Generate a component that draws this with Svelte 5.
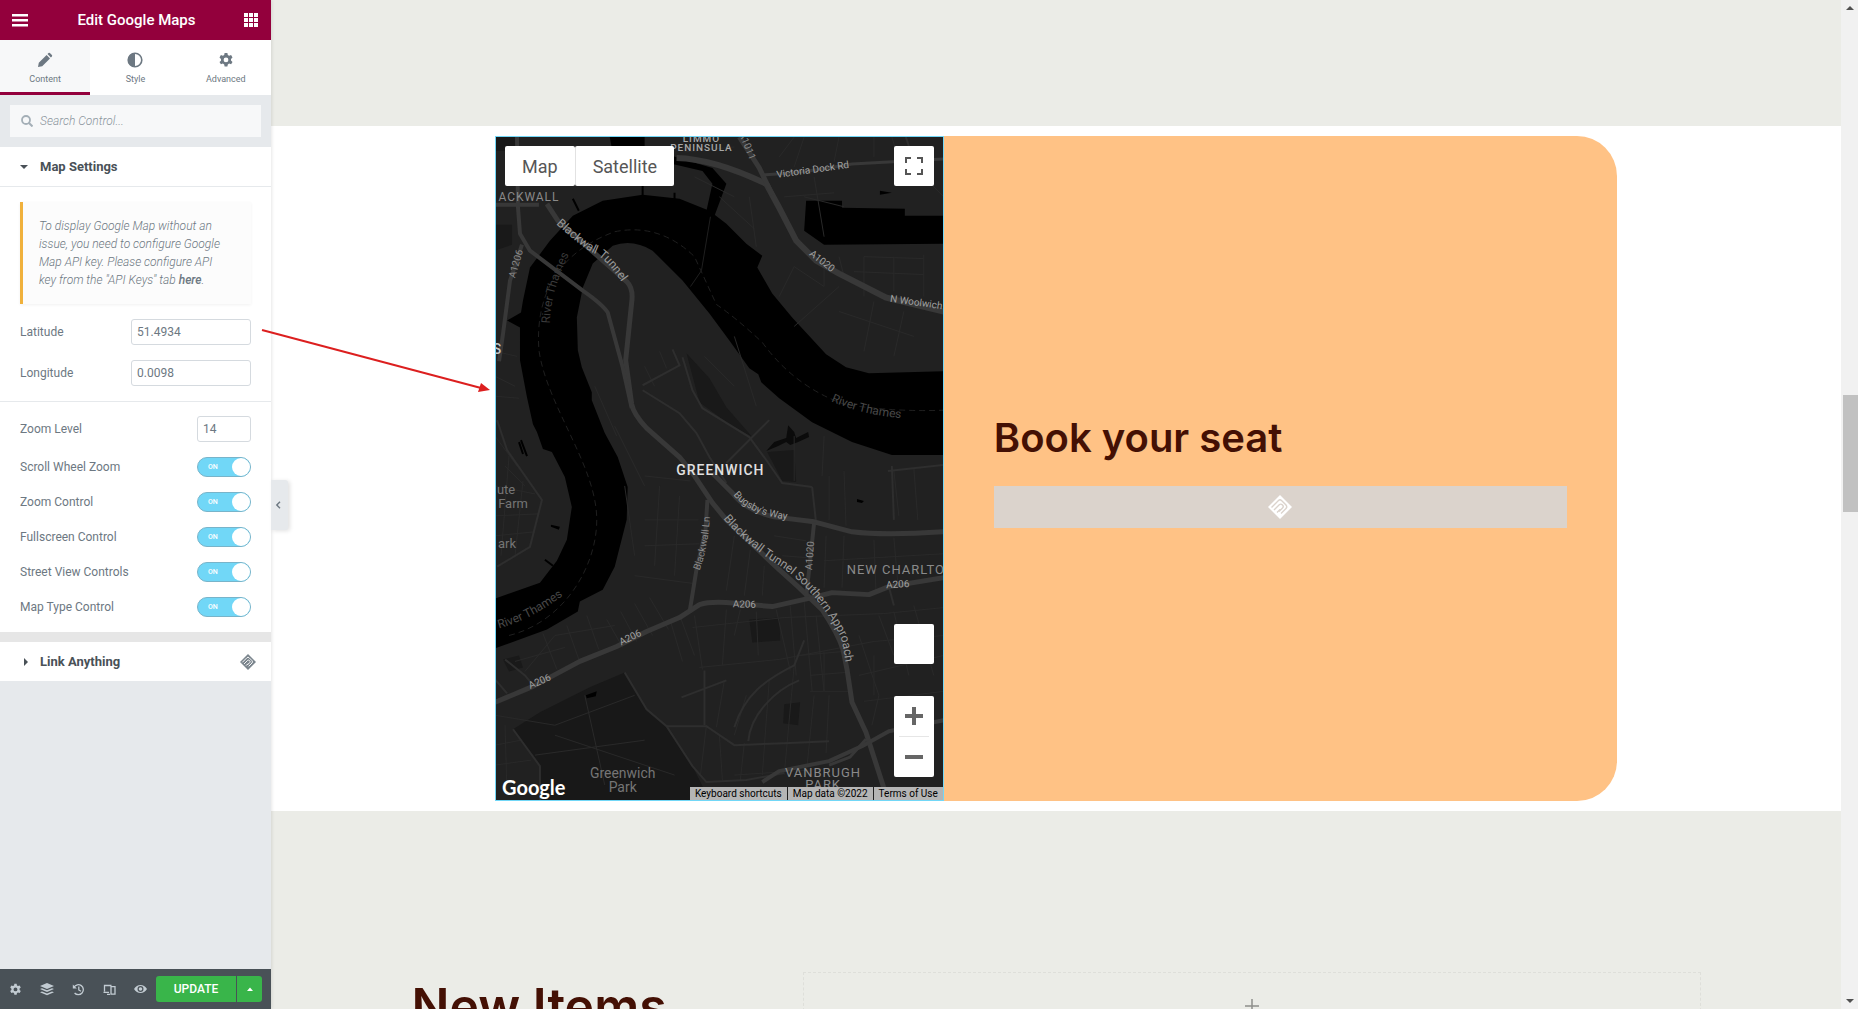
<script>
  let latitude = $state('51.4934');
  let longitude = $state('0.0098');
  let zoom = $state('14');
  let activeTab = $state('Content');

  let switches = $state([
    { id: 'scroll-wheel', label: 'Scroll Wheel Zoom', on: true },
    { id: 'zoom-control', label: 'Zoom Control', on: true },
    { id: 'fullscreen', label: 'Fullscreen Control', on: true },
    { id: 'street-view', label: 'Street View Controls', on: true },
    { id: 'map-type', label: 'Map Type Control', on: true }
  ]);

  const gear =
    'M6.6 1h2.8l.4 2 1.3.8 2-.7 1.4 2.4-1.5 1.4v1.6l1.5 1.4-1.4 2.4-2-.7-1.3.8-.4 2H6.6l-.4-2-1.3-.8-2 .7-1.4-2.4L3 8.700V7.100L1.500 5.500l1.400-2.400 2 .7L6.200 3zM8 5.500a2.400 2.400 0 1 0 0 4.800 2.400 2.400 0 0 0 0-4.800z';

  // main roads, drawn wide
  const roads = [
    { d: 'M52 67 63 84 132 145Q139 152 137 166L131 224 137 268Q139 278 152 292L185 321 198 337 218 367 232 384 285 434 305 452 328 474Q344 498 349 514L353 534 358 567 372 597 388 647 394 665', w: 5 },
    { d: 'M22 0 23 71 25 97 35 114 88 154Q108 168 113 176L128 231 137 272', w: 4 },
    { d: 'M27 108 15 144 8 197 4 225', w: 4 },
    { d: 'M182 21Q220 22 272 47L285 71 302 104 322 124 345 137 392 161 450 175', w: 6 },
    { d: 'M245 0 265 31 278 58', w: 5 },
    { d: 'M268 38Q310 36 358 27L450 22', w: 3 },
    { d: 'M0 567 38 551 85 526 122 511 152 496 185 482 205 469Q215 466 232 467L278 471 318 462 338 457 375 459 395 451 450 442', w: 5 },
    { d: 'M218 337 238 357Q250 374 280 381L320 386 358 396Q390 400 450 396', w: 5 },
    { d: 'M320 387 315 434 312 461', w: 4 },
    { d: 'M213 364 211 395 202 434 195 477', w: 4 },
    { d: 'M268 647 285 636 335 626 368 611 395 596 450 585', w: 4 },
    { d: 'M335 630 356 622 372 604', w: 3 },
    { d: 'M0 68H44', w: 4 }
  ];

  // side streets
  const lanes = [
    'M148 254 185 277 202 297 215 321 232 347',
    'M188 221 198 254 208 272 255 301 272 324 288 347 318 351',
    'M148 249 185 229 178 213M232 327 275 284',
    'M2 284 12 314 47 364 35 411 2 431',
    'M130 537 152 574 172 591 198 631 212 647 252 645 290 638',
    'M18 594 45 631 45 665M0 544 12 558',
    'M412 0 420 24M395 451 400 470M318 351 322 387',
    'M10 524 30 540 40 552M398 330 400 384M394 335 450 329',
    'M172 591H212L240 610 290 608 335 606M240 592C250 560 270 545 300 530L310 505',
    'M254 606C256 580 280 555 305 545M210 535V590M187 562 232 545'
  ];

  const streets = [
    'M205 532 285 524 380 506 450 500M198 492 290 482 390 478 450 472',
    'M140 468 158 500M126 476 142 506M112 484 128 512M155 462 174 494M176 486 188 526M186 482 200 520M200 480 208 534',
    'M232 474 228 530M246 474 240 500M262 476 264 520M282 474 296 535M296 470 302 540M310 466 318 556M322 480 330 556',
    'M305 520 350 516M316 540 352 537M316 556H354M330 516V556M230 545 222 592M252 560 240 600M275 545 268 640M300 530 290 640',
    'M320 560 312 640M335 560 332 618M212 590 206 640M225 600 228 645M250 608 246 645M240 640 330 634',
    'M365 500 385 560 378 590M385 480 400 520M400 476 415 540M420 470 440 540M365 540 450 520M370 566 450 556M380 520V560',
    'M150 340 196 345M150 384H204M165 350 160 430M185 360 180 440M150 410 205 408M140 440 200 448',
    'M240 400 232 455M256 414 250 460M270 430 268 460M332 400 330 452M350 400 348 452M380 404 382 455M400 402 404 448M330 425 450 418',
    'M280 400 312 405M288 420 314 422M335 340V384M350 335 352 390M300 300V345M330 300 328 340M400 335 405 380M420 332 424 384',
    'M285 160 300 130 330 150M300 190 345 150M330 120V150M345 120 350 140M370 120 430 122M360 135 430 138M370 120V160M400 120V155M430 118V160M345 175 420 200M380 165 370 215M410 175 400 220',
    'M200 40 240 60M255 60 262 110M285 20 300 0M300 30 310 0M340 25 345 0M380 20V0M225 60 260 92M240 10 190 15M140 40 150 10',
    'M0 300 22 330M10 330 30 350M0 350 40 358M0 380 44 378M0 400 40 396M14 320 6 420M28 345 20 420M0 240 20 250M0 260 24 262M0 215 22 220',
    'M100 250 122 300M120 290 150 350M130 350 140 420M150 230 160 250M165 215 172 232M210 220 240 250M240 200 262 270',
    'M0 580 60 590M60 590 140 560M60 600 180 640M90 560 110 650M40 620 150 605M0 610 26 605M0 630 36 625M10 590 12 660',
    'M30 536 60 500 120 490M20 526 70 512M48 498 62 534M72 490 84 524M92 480 104 514',
    'M398 0 404 20M420 30 450 60M310 60 350 70M320 40 330 100M290 60 340 56'
  ];

  const river =
    'M0 463 45 447 62 425 72 404 77 371 70 341 57 316 48 313 42 296 38 288 32 261 25 224 25 191 12 184 26 176 28 164 35 131 55 104 78 79 108 64 148 58 185 62 215 74 232 87 252 107 268 119 263 131 278 157 298 181 332 218 352 231 375 237 450 235V319H398L358 306 318 286 285 262 267 246 264 238 255 232 235 204 215 177 188 144 158 114Q138 102 118 109L98 127 88 151 82 181 83 214 87 231 97 256V264L110 297 123 321 133 351 132 384 120 431 108 454 85 466 83 476 52 494 0 513Z';

  const labels = [
    { text: 'LIMMO', x: 207, y: 5, size: 10, fill: '#a8a8a8', caps: true, bold: true },
    { text: 'PENINSULA', x: 207, y: 14, size: 10, fill: '#a8a8a8', caps: true, bold: true },
    { text: 'ACKWALL', x: 34, y: 64, size: 12, fill: '#8a8a8a', caps: true },
    { text: 'GREENWICH', x: 226, y: 339, size: 14, fill: '#e0e0e0', caps: true, bold: true },
    { text: 'NEW CHARLTO', x: 402, y: 438, size: 13, fill: '#8a8a8a', caps: true },
    { text: 'VANBRUGH', x: 329, y: 642, size: 13, fill: '#8a8a8a', caps: true },
    { text: 'PARK', x: 329, y: 654, size: 13, fill: '#8a8a8a', caps: true },
    { text: 'Greenwich', x: 128, y: 643, size: 14, fill: '#757575' },
    { text: 'Park', x: 128, y: 657, size: 14, fill: '#757575' },
    { text: 'ute', x: 11, y: 358, size: 13, fill: '#757575' },
    { text: 'Farm', x: 18, y: 372, size: 13, fill: '#757575' },
    { text: 'ark', x: 12, y: 412, size: 13, fill: '#757575' },
    { text: 'S', x: 2, y: 218, size: 14, fill: '#c4c4c4', bold: true },
    { text: 'A1206', x: 24, y: 128, size: 10, fill: '#8a8a8a', rotate: -74 },
    { text: 'A1011', x: 250, y: 10, size: 10, fill: '#8a8a8a', rotate: 68 },
    { text: 'A1020', x: 326, y: 127, size: 10, fill: '#a0a0a0', rotate: 38 },
    { text: 'N Woolwich', x: 422, y: 169, size: 10, fill: '#a0a0a0', rotate: 8 },
    { text: 'Victoria Dock Rd', x: 319, y: 36, size: 10, fill: '#a0a0a0', rotate: -8 },
    { text: 'A206', x: 46, y: 549, size: 10, fill: '#a0a0a0', rotate: -24 },
    { text: 'A206', x: 137, y: 505, size: 10, fill: '#a0a0a0', rotate: -26 },
    { text: 'A206', x: 250, y: 472, size: 10, fill: '#a0a0a0', rotate: 1 },
    { text: 'A206', x: 404, y: 452, size: 10, fill: '#a0a0a0', rotate: -3 },
    { text: 'A1020', x: 319, y: 420, size: 10, fill: '#8a8a8a', rotate: -86 }
  ];

  const curved = [
    { id: 'tunnel', d: 'M61 87Q88 112 100 117T134 156', text: 'Blackwall Tunnel', size: 12, fill: '#9a9a9a' },
    { id: 'approach', d: 'M229 383Q250 408 285 430T346 500Q350 512 354 545', text: 'Blackwall Tunnel Southern Approach', size: 12, fill: '#9a9a9a' },
    { id: 'bugsby', d: 'M239 359Q258 383 310 385', text: "Bugsby's Way", size: 10, fill: '#a0a0a0' },
    { id: 'lane', d: 'M205 435Q214 412 216 375', text: 'Blackwall Ln', size: 10, fill: '#8a8a8a' },
    { id: 'thames-west', d: 'M55 187Q56 152 77 112', text: 'River Thames', size: 12, fill: '#3a3a3a' },
    { id: 'thames-east', d: 'M337 265Q370 280 420 283', text: 'River Thames', size: 12, fill: '#484848' },
    { id: 'thames-south', d: 'M4 493Q42 482 78 452', text: 'River Thames', size: 12, fill: '#484848' }
  ];
</script>

{#snippet diamond(size)}
  <svg width={size} height={size} viewBox="0 0 24 24" aria-hidden="true">
    <path fill="currentColor" d="M12 0 24 12 12 24 0 12z" />
    <path
      class="cut"
      fill="none"
      stroke-width="1.400"
      d="M3.500 12.500 10.500 5.500Q12 4 13.500 5.500L18 10Q19.500 12 18 13.500L13 18.500M6 15 11.500 9.500Q13 8.500 14.500 10T14.500 13L11 16.500M9 17.500 12 14.500"
    />
  </svg>
{/snippet}

<div class="editor">
  <aside class="panel">
    <header class="panel-header">
      <button aria-label="Menu">
        <svg width="18" height="14" viewBox="0 0 18 14"><path fill="#fff" d="M1 1h16v2.600H1zM1 6h16v2.600H1zM1 11h16v2.600H1z" /></svg>
      </button>
      <h1>Edit Google Maps</h1>
      <button aria-label="Widgets">
        <svg width="14" height="14" viewBox="0 0 14 14">
          <path fill="#fff" d="M0 0h4v4H0zM5 0h4v4H5zM10 0h4v4h-4zM0 5h4v4H0zM5 5h4v4H5zM10 5h4v4h-4zM0 10h4v4H0zM5 10h4v4H5zM10 10h4v4h-4z" />
        </svg>
      </button>
    </header>

    <nav class="tabs">
      <button class:active={activeTab === 'Content'} onclick={() => (activeTab = 'Content')}>
        <svg width="16" height="16" viewBox="0 0 16 16">
          <path fill="currentColor" d="M1 15l.8-4.200L9.600 3l3.400 3.400-7.800 7.800zM10.500 2.100l1-1q.7-.6 1.400 0l2 2q.6.7 0 1.400l-1 1z" />
        </svg>
        Content
      </button>
      <button class:active={activeTab === 'Style'} onclick={() => (activeTab = 'Style')}>
        <svg width="16" height="16" viewBox="0 0 16 16">
          <circle cx="8" cy="8" r="6.800" fill="none" stroke="currentColor" stroke-width="1.600" />
          <path fill="currentColor" d="M8 1a7 7 0 0 0 0 14z" />
        </svg>
        Style
      </button>
      <button class:active={activeTab === 'Advanced'} onclick={() => (activeTab = 'Advanced')}>
        <svg width="16" height="16" viewBox="0 0 16 16"><path fill="currentColor" fill-rule="evenodd" d={gear} /></svg>
        Advanced
      </button>
    </nav>

    <div class="search">
      <label class="search-box">
        <svg width="12" height="12" viewBox="0 0 12 12">
          <circle cx="5" cy="5" r="4" fill="none" stroke="#a4afb7" stroke-width="1.800" />
          <path d="M8 8l3.500 3.500" stroke="#a4afb7" stroke-width="2" />
        </svg>
        <input type="search" placeholder="Search Control..." aria-label="Search Control" />
      </label>
    </div>

    <section>
      <button class="section-title">
        <svg width="8" height="8" viewBox="0 0 8 8"><path fill="#495157" d="M0 2h8L4 6z" /></svg>
        Map Settings
      </button>
      <div class="controls">
        <p class="notice">
          To display Google Map without an issue, you need to configure Google Map API key. Please configure API key
          from the "API Keys" tab <a href="#api-keys">here</a>.
        </p>
        <div class="field">
          <label for="latitude">Latitude</label>
          <input id="latitude" type="text" bind:value={latitude} />
        </div>
        <div class="field">
          <label for="longitude">Longitude</label>
          <input id="longitude" type="text" bind:value={longitude} />
        </div>
      </div>
      <div class="controls second">
        <div class="field">
          <label for="zoom">Zoom Level</label>
          <input id="zoom" class="short" type="text" bind:value={zoom} />
        </div>
        {#each switches as item (item.id)}
          <label class="switch-row">
            {item.label}
            <span class="switch" class:off={!item.on}>
              <input type="checkbox" bind:checked={item.on} />
              <span>{item.on ? 'ON' : 'OFF'}</span>
              <i></i>
            </span>
          </label>
        {/each}
      </div>
    </section>

    <section class="closed">
      <button class="section-title">
        <svg width="8" height="8" viewBox="0 0 8 8"><path fill="#495157" d="M4 0v8l4-4z" /></svg>
        Link Anything
        <span class="brand">{@render diamond(16)}</span>
      </button>
    </section>

    <footer class="panel-footer">
      <button aria-label="Settings">
        <svg width="13" height="13" viewBox="0 0 16 16"><path fill="currentColor" fill-rule="evenodd" d={gear} /></svg>
      </button>
      <button aria-label="Navigator">
        <svg width="14" height="13" viewBox="0 0 14 13">
          <path fill="currentColor" d="M7 0l7 3-7 3-7-3zM0 6l2-.8L7 7.300l5-2.100 2 .8-7 3zM0 9.200l2-.8 5 2.100 5-2.100 2 .8-7 3z" />
        </svg>
      </button>
      <button aria-label="History">
        <svg width="13" height="13" viewBox="0 0 13 13">
          <path fill="none" stroke="currentColor" stroke-width="1.300" d="M2 4.200A5 5 0 1 1 2.600 10M6.800 3.600V7l2.200 1.300" />
          <path fill="currentColor" d="M.8 1.500V5.500H4.800z" />
        </svg>
      </button>
      <button aria-label="Responsive mode">
        <svg width="13" height="13" viewBox="0 0 13 13">
          <path fill="none" stroke="currentColor" stroke-width="1.300" d="M1.500 8.500v-6h7M.5 9.300H6M8 3.700h4v7.500H8zM4 11.300h3" />
        </svg>
      </button>
      <button aria-label="Preview changes">
        <svg width="13" height="10" viewBox="0 0 13 10">
          <path fill="currentColor" fill-rule="evenodd" d="M6.500 1Q10.500 1 13 5 10.500 9 6.500 9T0 5Q2.500 1 6.500 1zM6.500 2a3 3 0 1 0 0 6 3 3 0 0 0 0-6zm0 1.200a1.800 1.800 0 1 1 0 3.600 1.800 1.800 0 0 1 0-3.600z" />
        </svg>
      </button>
      <div class="publish">
        <button class="update">UPDATE</button>
        <button class="more" aria-label="Save options">
          <svg width="8" height="8" viewBox="0 0 8 8"><path fill="#fff" d="M1 6h6L4 2.500z" /></svg>
        </button>
      </div>
    </footer>

    <button class="collapse" aria-label="Hide panel">
      <svg width="6" height="8" viewBox="0 0 6 8"><path fill="none" stroke="#6d7882" stroke-width="1.400" d="M5 .8 1.800 4 5 7.200" /></svg>
    </button>
  </aside>

  <main class="canvas">
    <div class="booking">
      <div class="row">
        <div class="map">
          <svg class="tiles" viewBox="0 0 450 665" preserveAspectRatio="xMidYMid slice" role="img" aria-label="Map of Greenwich">
            <rect width="450" height="665" fill="#212121" />
            <path fill="#181818" d="M130 537 95 552 45 577 18 594 45 631 45 665H215L198 631 172 591 152 574z" />
            <path fill="#191919" d="M192 217 215 242 232 271 258 301 235 288 205 266zM255 484 285 482 286 505 258 507zM290 569 306 567 304 590 289 588zM273 316 300 314 302 346 288 345z" />
            <path fill="#191919" d="M0 88 17 88 17 108 0 114zM8 524 24 520 28 532 14 536zM0 0H20V14H0z" />
            <path fill="#000" d={river} />
            <path fill="#000" d="M178 19 218 31 232 47 219 82 212 74 218 47 208 34 178 27zM312 64H348V71L411 72V79H450V107L330 108 310 94zM115 0H150V16H118z" />
            <path fill="#0b0b0b" d="M272 315 280 306 292 302 294 289 300 296 302 302 314 296 315 301 304 306 296 309 292 306 284 310z" />
            <path fill="#000" d="M56 389 65 391 64 394 56 391zM363 363 370 365 368 367 363 366zM91 560 102 556 101 561 92 563zM386 54 398 56 386 58z" />
            <path stroke="#000" stroke-width="2" fill="none" d="M148 46V62M78 62 84 74M180 56V64M26 304 32 320M24 306 28 318M50 424 58 430" />
            <g fill="none" stroke="#292929" stroke-width="1">
              {#each streets as d}<path {d} />{/each}
            </g>
            <g fill="none" stroke="#2e2e2e" stroke-width="2">
              {#each lanes as d}<path {d} />{/each}
            </g>
            <path fill="none" stroke="#1f1f1f" stroke-dasharray="6 4" d="M14 500C70 486 102 430 102 384C102 330 52 270 44 214C40 160 62 116 120 95Q165 86 200 120L222 168Q240 180 268 206 300 250 350 268 400 276 450 274" />
            <path fill="none" stroke="#1f1f1f" d="M216 80 207 134 196 150" />
            <g fill="none" stroke="#383838" stroke-linejoin="round">
              {#each roads as road}<path d={road.d} stroke-width={road.w} />{/each}
            </g>
            {#each labels as label}
              <text
                class:caps={label.caps}
                class:bold={label.bold}
                x={label.x}
                y={label.y}
                font-size={label.size}
                fill={label.fill}
                text-anchor="middle"
                transform={label.rotate ? `rotate(${label.rotate} ${label.x} ${label.y})` : undefined}>{label.text}</text>
            {/each}
            {#each curved as label}
              <path id={label.id} d={label.d} fill="none" />
              <text font-size={label.size} fill={label.fill}><textPath href="#{label.id}">{label.text}</textPath></text>
            {/each}
          </svg>

          <div class="map-types">
            <button>Map</button>
            <button>Satellite</button>
          </div>
          <button class="square fullscreen" aria-label="Toggle fullscreen view">
            <svg width="18" height="18" viewBox="0 0 18 18"><path fill="#555" d="M0 0h6v2H2v4H0zM12 0h6v6h-2V2h-4zM0 12h2v4h4v2H0zM16 12h2v6h-6v-2h4z" /></svg>
          </button>
          <div class="map-side">
            <button class="square" aria-label="Street View"></button>
            <div class="zoomers">
              <button aria-label="Zoom in"><svg width="18" height="18" viewBox="0 0 18 18"><path fill="#666" d="M7 0h4v7h7v4h-7v7H7v-7H0V7h7z" /></svg></button>
              <hr />
              <button aria-label="Zoom out"><svg width="18" height="18" viewBox="0 0 18 18"><path fill="#666" d="M0 7h18v4H0z" /></svg></button>
            </div>
          </div>
          <a class="google" href="#google">Google</a>
          <div class="legal">
            <button>Keyboard shortcuts</button>
            <span>Map data ©2022</span>
            <a href="#terms">Terms of Use</a>
          </div>
        </div>

        <div class="seat">
          <h2>Book your seat</h2>
          <div class="placeholder">{@render diamond(24)}</div>
        </div>
      </div>
    </div>

    <div class="items">
      <h2>New Items</h2>
      <div class="drop-zone">
        <svg width="14" height="14" viewBox="0 0 14 14"><path stroke="#8f8f8c" stroke-width="1.500" d="M7 0v14M0 7h14" /></svg>
      </div>
    </div>
  </main>

  <div class="scrollbar">
    <svg width="10" height="6" viewBox="0 0 10 6"><path fill="#505050" d="M1 5h8L5 1z" /></svg>
    <div class="track"><div class="thumb"></div></div>
    <svg width="10" height="6" viewBox="0 0 10 6"><path fill="#505050" d="M1 1h8L5 5z" /></svg>
  </div>

  <!-- arrow pointing from the coordinates to the map -->
  <svg class="arrow" width="232" height="70" viewBox="0 0 232 70" aria-hidden="true">
    <path d="M1 4 220 62" stroke="#dc1f1f" stroke-width="2" />
    <path fill="#dc1f1f" d="M229 64 217 66 220 57z" />
  </svg>
</div>

<style>
  :global(body) {
    overflow: hidden;
  }

  .editor {
    position: relative;
    display: flex;
    height: 100vh;
    overflow: hidden;
    font-family: Roboto, 'Liberation Sans', sans-serif;
    color: #6d7882;
  }

  .editor :global(*) {
    box-sizing: border-box;
  }

  button {
    border: 0;
    padding: 0;
    background: none;
    color: inherit;
    font: inherit;
    cursor: pointer;
  }

  svg {
    display: block;
    flex: none;
  }

  a {
    color: inherit;
    text-decoration: none;
  }

  h1,
  h2,
  p {
    margin: 0;
  }

  /* left panel */
  .panel {
    position: relative;
    z-index: 1;
    display: flex;
    flex-direction: column;
    flex: none;
    width: 271px;
    background: #e6e9ec;
    box-shadow: 0 0 4px rgba(0, 0, 0, 0.15);
  }

  .panel-header {
    display: flex;
    align-items: center;
    justify-content: space-between;
    height: 40px;
    padding: 0 13px 0 11px;
    background: #93003c;
    color: #fff;
  }

  h1 {
    font-size: 15px;
    font-weight: 500;
  }

  .tabs {
    display: flex;
    height: 55px;
    background: #fff;
  }

  .tabs button {
    display: flex;
    flex: 1;
    flex-direction: column;
    align-items: center;
    gap: 4px;
    padding-top: 12px;
    border-bottom: 3px solid transparent;
    font-size: 9px;
    line-height: 14px;
  }

  .tabs .active {
    border-color: #93003c;
    background: #f7f8f9;
  }

  .search {
    padding: 10px;
  }

  .search-box {
    display: flex;
    align-items: center;
    gap: 7px;
    height: 32px;
    padding: 0 11px;
    background: #f7f8f9;
  }

  .search-box input {
    flex: 1;
    min-width: 0;
    border: 0;
    padding: 0;
    outline: none;
    background: none;
    color: #6d7882;
    font: italic 300 12px Roboto, sans-serif;
  }

  .search-box input::placeholder {
    color: #8b959d;
  }

  section {
    background: #fff;
  }

  .section-title {
    display: flex;
    align-items: center;
    gap: 12px;
    width: 100%;
    height: 40px;
    padding: 0 15px 0 20px;
    border-bottom: 1px solid #e6e9ec;
    color: #495157;
    font-size: 13px;
    font-weight: 700;
  }

  .brand {
    margin-left: auto;
    color: #7b858d;
  }

  .cut {
    stroke: #fff;
  }

  .closed {
    border-top: 10px solid #e6e6e6;
  }

  .controls {
    display: flex;
    flex-direction: column;
    gap: 15px;
    padding: 15px 20px;
  }

  .second {
    padding-top: 14px;
    border-top: 1px solid #e6e9ec;
  }

  .notice {
    padding: 15px 20px 15px 16px;
    border-left: 3px solid #f0b13c;
    background: #fcfcfc;
    box-shadow: 0 1px 3px rgba(0, 0, 0, 0.06);
    font-size: 12px;
    font-style: italic;
    font-weight: 300;
    line-height: 18px;
  }

  .notice a {
    font-weight: 500;
  }

  .field,
  .switch-row {
    display: flex;
    align-items: center;
    justify-content: space-between;
    font-size: 12px;
  }

  .field input {
    width: 120px;
    height: 26px;
    padding: 0 5px;
    border: 1px solid #d5dadf;
    border-radius: 3px;
    background: #fff;
    color: #6d7882;
    font: 12px Roboto, sans-serif;
  }

  .field .short {
    width: 54px;
  }

  .switch {
    display: flex;
    align-items: center;
    justify-content: space-between;
    width: 54px;
    height: 20px;
    padding: 0 0 0 10px;
    border: 1px solid #78b4ca;
    border-radius: 10px;
    background: #71d7f7;
    color: #fff;
    font-size: 7px;
    font-weight: 500;
  }

  .switch input {
    position: absolute;
    opacity: 0;
  }

  .switch i {
    width: 18px;
    height: 18px;
    border-radius: 50%;
    background: #fff;
  }

  .off {
    flex-direction: row-reverse;
    padding: 0 10px 0 0;
    border-color: #a4afb7;
    background: #c2cbd2;
  }

  .panel-footer {
    display: flex;
    align-items: center;
    height: 40px;
    margin-top: auto;
    padding-right: 9px;
    background: #495157;
    color: #c2cbd2;
  }

  .panel-footer > button {
    display: flex;
    flex: 1;
    align-items: center;
    justify-content: center;
  }

  .publish {
    display: flex;
    gap: 1px;
    height: 26px;
    color: #fff;
  }

  .publish button {
    background: #39b54a;
  }

  .update {
    width: 80px;
    border-radius: 3px 0 0 3px;
    font-size: 12px;
    font-weight: 500;
  }

  .more {
    display: flex;
    align-items: center;
    justify-content: center;
    width: 25px;
    border-radius: 0 3px 3px 0;
  }

  .collapse {
    position: absolute;
    top: calc(50% - 25px);
    left: 100%;
    display: flex;
    align-items: center;
    width: 17px;
    height: 50px;
    padding-left: 4px;
    border-radius: 0 3px 3px 0;
    background: #e6e9ec;
    box-shadow: 2px 1px 4px rgba(0, 0, 0, 0.12);
  }

  /* page being edited */
  .canvas {
    flex: 1;
    min-width: 0;
    padding-top: 126px;
    overflow: hidden;
    background: #ebece7;
  }

  .booking {
    padding: 10px;
    background: #fff;
  }

  .row {
    display: flex;
    max-width: 1122px;
    min-height: 665px;
    margin: 0 auto;
  }

  .map {
    position: relative;
    width: 40%;
    border: 1px solid #71d7f7;
    overflow: hidden;
    background: #212121;
  }

  .tiles {
    position: absolute;
    width: 100%;
    height: 100%;
  }

  .caps {
    letter-spacing: 1px;
  }

  .bold {
    font-weight: 500;
  }

  .map-types {
    position: absolute;
    top: 9px;
    left: 9px;
    display: flex;
    color: #565656;
    font-size: 18px;
  }

  .map-types button {
    height: 40px;
    padding: 0 17px;
    border-radius: 2px;
    background: #fff;
  }

  .map-types button + button {
    border-left: 1px solid #e2e2e2;
  }

  .square {
    display: flex;
    align-items: center;
    justify-content: center;
    width: 40px;
    height: 40px;
    border-radius: 2px;
    background: #fff;
  }

  .fullscreen {
    position: absolute;
    top: 9px;
    right: 9px;
  }

  .map-side {
    position: absolute;
    right: 9px;
    bottom: 23px;
    display: flex;
    flex-direction: column;
    gap: 32px;
  }

  .zoomers {
    border-radius: 2px;
    background: #fff;
  }

  .zoomers button {
    display: flex;
    align-items: center;
    justify-content: center;
    width: 40px;
    height: 40px;
  }

  hr {
    height: 1px;
    margin: 0 5px;
    border: 0;
    background: #e6e6e6;
  }

  .google {
    position: absolute;
    bottom: 0;
    left: 6px;
    color: #fff;
    font: 700 20px/26px Lato, sans-serif;
  }

  .legal {
    position: absolute;
    right: 0;
    bottom: 0;
    display: flex;
    gap: 1px;
    color: #000;
    font-size: 10px;
    line-height: 12px;
  }

  .legal > :global(*) {
    padding: 1px 5px 0;
    background: #b5b5b5;
  }

  .seat {
    display: flex;
    width: 60%;
    flex-direction: column;
    justify-content: center;
    gap: 24px;
    padding: 4px 50px 0;
    border-radius: 0 40px 40px 0;
    background: #ffc285;
  }

  h2 {
    color: #441004;
    font-family: Inter, sans-serif;
    font-weight: 600;
  }

  .seat h2 {
    font-size: 40px;
    line-height: 48px;
  }

  .placeholder {
    display: flex;
    align-items: center;
    justify-content: center;
    height: 42px;
    background: #dbd3cc;
    color: #fff;
  }

  .placeholder :global(.cut) {
    stroke: #dbd3cc;
  }

  .items {
    display: flex;
    max-width: 1289px;
    margin: 161px auto 0;
  }

  .items h2 {
    width: 391px;
    padding-top: 4px;
    font-size: 50px;
    line-height: 60px;
  }

  .drop-zone {
    display: flex;
    flex: 1;
    justify-content: center;
    height: 70px;
    padding-top: 26px;
    border: 1px dashed #dedfda;
  }

  .scrollbar {
    display: flex;
    flex: none;
    flex-direction: column;
    align-items: center;
    width: 17px;
    padding: 5px 0;
    background: #f1f1f1;
  }

  .track {
    flex: 1;
    width: 100%;
    padding: 384px 0 0 2px;
  }

  .thumb {
    height: 117px;
    background: #c1c1c1;
  }

  .arrow {
    position: absolute;
    top: 326px;
    left: 261px;
    z-index: 2;
  }
</style>
